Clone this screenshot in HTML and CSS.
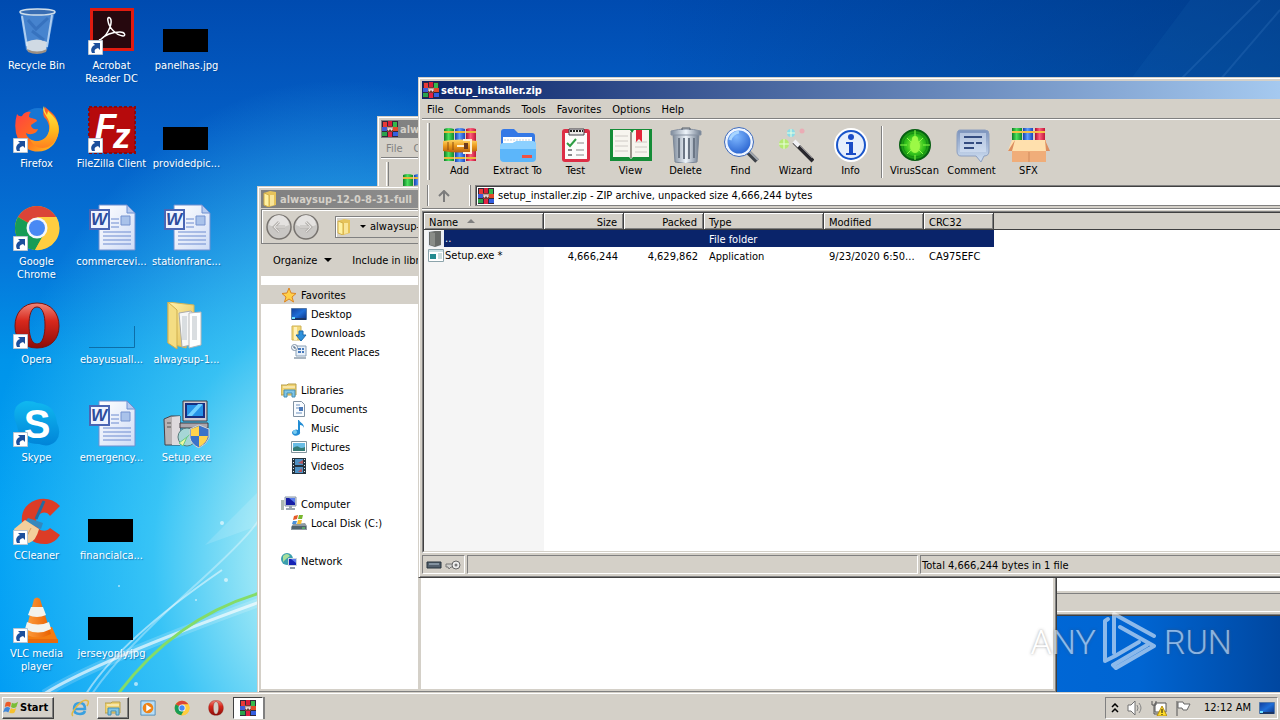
FILE: index.html
```html
<!DOCTYPE html>
<html lang="en">
<head>
<meta charset="utf-8">
<title>setup_installer.zip</title>
<link rel="stylesheet" href="styles.css">
</head>
<body>
<svg class="defs" aria-hidden="true">
  <defs>
    <linearGradient id="gBlue" x1="0" y1="0" x2="0" y2="1"><stop offset="0" stop-color="#2f6fe0"/><stop offset="1" stop-color="#5cc3ff"/></linearGradient>
    <linearGradient id="gRed" x1="0" y1="0" x2="0" y2="1"><stop offset="0" stop-color="#f0877a"/><stop offset=".4" stop-color="#d8281c"/><stop offset="1" stop-color="#8c0c08"/></linearGradient>
    <linearGradient id="gFox" x1="0" y1="0" x2="1" y2="1"><stop offset="0" stop-color="#ff3b4a"/><stop offset=".5" stop-color="#ff6a20"/><stop offset="1" stop-color="#ffcc1c"/></linearGradient>
    <linearGradient id="gFoxY" x1="0" y1="0" x2="0" y2="1"><stop offset="0" stop-color="#fff04a"/><stop offset=".6" stop-color="#ffb81c"/><stop offset="1" stop-color="#ff8020"/></linearGradient>
    <linearGradient id="gPage" x1="0" y1="0" x2="1" y2="1"><stop offset="0" stop-color="#fff"/><stop offset="1" stop-color="#cfdcf6"/></linearGradient>
    <linearGradient id="gFolder" x1="0" y1="0" x2="1" y2="1"><stop offset="0" stop-color="#fff3b0"/><stop offset="1" stop-color="#e3bc4a"/></linearGradient>
    <linearGradient id="gSteel" x1="0" y1="0" x2="1" y2="0"><stop offset="0" stop-color="#7e8b9c"/><stop offset=".5" stop-color="#eef4fa"/><stop offset="1" stop-color="#6f7c8e"/></linearGradient>
    <linearGradient id="gComment" x1="0" y1="0" x2="0" y2="1"><stop offset="0" stop-color="#7c93bc"/><stop offset="1" stop-color="#d3e2f4"/></linearGradient>
    <linearGradient id="gCone" x1="0" y1="0" x2="1" y2="0"><stop offset="0" stop-color="#ffa040"/><stop offset="1" stop-color="#e86000"/></linearGradient>
    <linearGradient id="gScreen" x1="0" y1="0" x2="1" y2="1"><stop offset="0" stop-color="#123f9c"/><stop offset=".5" stop-color="#1f6fd8"/><stop offset="1" stop-color="#0a2f80"/></linearGradient>
    <linearGradient id="gSkype" x1="0" y1="0" x2="0" y2="1"><stop offset="0" stop-color="#10b8f0"/><stop offset="1" stop-color="#0084d8"/></linearGradient>
    <linearGradient id="gBookG" x1="0" y1="0" x2="1" y2="0"><stop offset="0" stop-color="#0d7c26"/><stop offset=".45" stop-color="#4be05c"/><stop offset="1" stop-color="#128a2c"/></linearGradient>
    <linearGradient id="gBookB" x1="0" y1="0" x2="1" y2="0"><stop offset="0" stop-color="#1840a8"/><stop offset=".45" stop-color="#5a9cff"/><stop offset="1" stop-color="#1a48bc"/></linearGradient>
    <linearGradient id="gBookR" x1="0" y1="0" x2="1" y2="0"><stop offset="0" stop-color="#b01030"/><stop offset=".45" stop-color="#ff5c7c"/><stop offset="1" stop-color="#c01838"/></linearGradient>
    <linearGradient id="gBelt" x1="0" y1="0" x2="0" y2="1"><stop offset="0" stop-color="#ffd868"/><stop offset=".5" stop-color="#ec9a1c"/><stop offset="1" stop-color="#b8600c"/></linearGradient>
    <radialGradient id="gLens" cx=".4" cy=".3" r=".8"><stop offset="0" stop-color="#7fb8ff"/><stop offset="1" stop-color="#1c56c8"/></radialGradient>
    <radialGradient id="gGreen"><stop offset="0" stop-color="#b6ff50"/><stop offset=".6" stop-color="#34c41c"/><stop offset="1" stop-color="#118a10"/></radialGradient>
  </defs>

  <symbol id="shortcut" viewBox="0 0 15 15"><path d="M.5.5h14v14H.5z" fill="#fff" stroke="#b9c4d0"/><path d="M4 13C2 9 4 6 7 5L5 3h7v7l-2-2c-3 1-4 2-3 5z" fill="#1c4f9c"/></symbol>

  <symbol id="bin" viewBox="0 0 48 48"><path d="M7 3 13 42q11 6 21 0L42 3Q24-2 7 3z" fill="#8cb8e8" fill-opacity=".5"/><path d="M13 34q11-5 21 0l-1 8q-9 5-19 0z" fill="#dfe3e6" fill-opacity=".9"/><path d="m9 8 5 30M39 7l-5 32" stroke="#d9ecff" stroke-opacity=".7" stroke-width="2"/><path d="m15 12 8 9 12-11M19 23l12 9" stroke="#2762b0" stroke-opacity=".5" fill="none" stroke-width="3"/><ellipse cx="24.500" cy="4" rx="17.500" ry="3" fill="#396db2" stroke="#cfdeea" stroke-width="1.500"/><path d="M14 41q10 5 20 0l-1 3q-9 4-18 0z" fill="#9b8f84"/></symbol>
  <symbol id="acrobat" viewBox="0 0 48 48"><path d="M2 0h44v43H2z" fill="#e01b10"/><path d="M5 3h38v37H5z" fill="#26080e"/><path d="M11 32c8-3 13-15 12-20-1-4-4-3-3 1 1 7 8 14 15 15 3 0 2-4-3-4-7 0-15 3-20 8" fill="none" stroke="#fff" stroke-width="1.500"/></symbol>
  <symbol id="black" viewBox="0 0 48 48"><path d="M0 21h45v23H0z" fill="#000"/></symbol>
  <symbol id="thin" viewBox="0 0 48 48"><path d="M1 45.500h45.500V24" fill="none" stroke="#0d6ea8"/></symbol>
  <symbol id="firefox" viewBox="0 0 48 48"><circle cx="25" cy="19" r="17" fill="#1876d4"/><path d="M4 8q-4 14 1 25c6 13 24 17 34 7 9-9 9-26-1-34L32 1q-3 5-1 10c9 8 6 23-5 24-7 1-12-3-13-8 5 3 11 0 12-4-4 1-7-1-7-4l6-4c0-3-6-2-8-4 0-3 1-4 2-5Q12 5 9 10 6 11 4 8z" fill="url(#gFox)"/><path d="M31 0c-4 8 9 12 5 25-3 11-14 12-19 8 5 13 23 12 28-4 4-14-7-20-10-24l-1 4q-3-4-3-9z" fill="url(#gFoxY)"/></symbol>
  <symbol id="filezilla" viewBox="0 0 48 48"><path d="M1 1h46v46H1z" fill="#b60a0c" stroke="#8e0a0c" stroke-width="2" stroke-dasharray="3 2"/></symbol>
  <symbol id="chrome" viewBox="0 0 48 48"><circle cx="24" cy="24" r="22" fill="#fbc116"/><path d="M24 24 5 13a22 22 0 0 1 38 0z" fill="#db4437"/><path d="M24 24 5 13a22 22 0 0 0 17 33l9-16z" fill="#179c56"/><path d="M24 13h19.500a22 22 0 0 1-21.500 33l10-18z" fill="#ffcd40"/><circle cx="24" cy="24" r="10.500" fill="#f4f7fb"/><circle cx="24" cy="24" r="8" fill="#4889f4"/></symbol>
  <symbol id="word" viewBox="0 0 48 48"><path d="M11 1h28l8 8v37H11z" fill="url(#gPage)" stroke="#6f8fd0"/><path d="M39 1v8h8z" fill="#b6cbf0" stroke="#6f8fd0"/><path d="M23 15h8M23 19h8M23 23h8M15 28h28M15 32h28M15 36h28M15 40h28" stroke="#6c8bd0"/><path d="M33 12h9v9h-9z" fill="#a9c2ea" stroke="#7492cf"/><path d="M2 6h19v19H2z" fill="#eef3ff" stroke="#4a66b4" stroke-width="2"/></symbol>
  <symbol id="opera" viewBox="0 0 48 48"><path fill-rule="evenodd" d="M24 1C10 1 2 11 2 24s8 22 22 22 22-9 22-22S38 1 24 1zm0 4c6 0 8 9 8 18s-2 19-8 19-8-10-8-19 2-18 8-18z" fill="url(#gRed)" stroke="#7c1410"/></symbol>
  <symbol id="openfolder" viewBox="0 0 48 48"><path d="m5 0 26 3v9l-8 34L5 41z" fill="url(#gFolder)" stroke="#d3b556"/><path d="m16 11 12-2 4 5v28l-13 3z" fill="#f7f7f7" stroke="#aaa"/><path d="m26 11 12-1v33l-12 3z" fill="#fff" stroke="#b8b8b8"/><path d="M19 14h5v24h-5zM29 14h5v24h-5z" fill="#d9dde0"/><path d="m5 0 9 8v39l-9-6z" fill="#f4dd83" stroke="#cfae4c"/></symbol>
  <symbol id="skype" viewBox="0 0 48 48"><path d="M13 1q8 0 11 2 18 1 20 20 5 10-1 18-7 7-17 3Q7 44 4 26-1 15 3 7q4-5 10-6z" fill="url(#gSkype)"/></symbol>
  <symbol id="setup" viewBox="0 0 48 48"><path d="m1 19 7-3h9v29H2z" fill="#b7b2b3" stroke="#45424a"/><path d="m9 17 8-1v29H9z" fill="#dedadd"/><path d="M4 23h4M4 27h4" stroke="#555"/><path d="M20 1h24v20H20z" fill="#cfcbd4" stroke="#3c3940"/><path d="M23 4h18v13H23z" fill="#2593e8" stroke="#162f80" stroke-width="2"/><path d="m24 16 11-12h5L29 16z" fill="#71d1ff"/><path d="M17 23h28v5H17z" fill="#aaa6ad" stroke="#403c43"/><circle cx="24" cy="37" r="9" fill="#a6d6d6" stroke="#587b7b"/><path d="m24 37-8 6 4 3zM24 37l8-7" fill="#edf8a0" stroke="#67c987"/><path d="m36 25 10 4v9q-2 6-10 10-8-4-9-10v-9z" fill="#3b73c8" stroke="#d4d4d4"/><path d="M36 26v10h-8v-7zM36 36h9q-1 7-9 11z" fill="#ffd34d"/></symbol>
  <symbol id="ccleaner" viewBox="0 0 48 48"><path d="M47 8Q37-2 23 2 7 8 9 25q3 22 25 21 8-1 13-9l-10-7c-4 5-14 3-14-6s10-13 14-6z" fill="#dc3c26"/><path d="m31 3-8 18" stroke="#266b9e" stroke-width="3"/><path d="m15 20 15 5-2 6-16-7z" fill="#3588bd"/><path d="M12 22 1 31l3 10 12 4q7-2 10-14z" fill="#f3cf9c"/><path d="m10 34-4 8M18 30l-6 12" stroke="#d79d62"/></symbol>
  <symbol id="vlc" viewBox="0 0 48 48"><path d="m12 32-6 13h39l-6-14z" fill="#f47c10"/><path d="M21 3q3-3 6 0l11 35q-13 7-26 0z" fill="url(#gCone)"/><path d="m18 11 12 0 3 8q-9 4-18 0zM14 26q11 5 22 0l2 7q-13 7-26 0z" fill="#f3f3ed"/><path d="M6 43h39v4H6z" fill="#e86a0c"/></symbol>

  <symbol id="rar" viewBox="0 0 36 36"><path d="M2 2q4-2 10 0v32H2z" fill="url(#gBookG)"/><path d="M13 2q5-2 10 0v33H13z" fill="url(#gBookB)"/><path d="M24 2q5-2 10 0v32H24z" fill="url(#gBookR)"/><path d="M2 5h10M13 5h10M24 5h10M2 31h10M13 31h10M24 31h10" stroke="#e8b83c" stroke-width="2"/><path d="M1 14q17-3 34 0v10q-17 3-34 0z" fill="url(#gBelt)"/><path d="M21 13h8v13h-8M15 19h10" fill="none" stroke="#fff0d0" stroke-width="2"/><path d="M22 16h4v6h-4z" fill="#6c3a1c"/><path d="M6 15v8M11 15v8" stroke="#8c4c10"/></symbol>
  <symbol id="rarsmall" viewBox="0 0 16 16"><path d="M0 0h16v16H0z" fill="#342739"/><path d="M1 1h4v5H1z" fill="#e83a38"/><path d="M6 0h4v6H6z" fill="#d91e3a"/><path d="M11 1h4v5h-4z" fill="#35b94b"/><path d="M0 6h5v4H0z" fill="#3f5dd5"/><path d="M0 11h5v4H0z" fill="#2ca34d"/><path d="M6 11h4v5H6z" fill="#e32343"/><path d="M11 6h5v4h-5z" fill="#e34b28"/><path d="M11 11h5v4h-5z" fill="#345fe0"/><path d="M5 5h6v6H5z" fill="#7b3d32"/><path d="M6 6v3h1V7h2v2h1V6" stroke="#fff" fill="none"/></symbol>
  <symbol id="extract" viewBox="0 0 36 36"><path d="M1 5q0-3 3-3h10l4 4h14q3 0 3 3v22H1z" fill="#3478e6"/><path d="M3 10h29v12H3z" fill="#fff"/><path d="M4 13h27" stroke="#c3cfdf" stroke-dasharray="2 1"/><path d="M0 20q0-4 4-4h9l4-2h15q4 0 4 4v13q0 4-4 4H4q-4 0-4-4z" fill="#5cb6fa"/><path d="M0 20q0-4 4-4h9l4-2h15q4 0 4 4v4H0z" fill="#8cd0ff"/><path d="M22 28h10v3H22z" fill="#f05243"/></symbol>
  <symbol id="test" viewBox="0 0 36 36"><rect x="4" y="2" width="28" height="33" rx="3" fill="#dd2e45"/><path d="M7 6h22v26H7z" fill="#fcfcfa"/><path d="M11 2h15v6H11z" fill="#e9e7e5" stroke="#45404a"/><path d="M12 4h13" stroke="#222" stroke-width="2" stroke-dasharray="2 1"/><path d="m9 16 3 3 6-7" stroke="#2f9d43" fill="none" stroke-width="2"/><path d="M19 16h7M18 23h8M18 28h8" stroke="#888"/><path d="M10 23h4M10 28h4" stroke="#888" stroke-width="2"/></symbol>
  <symbol id="view" viewBox="0 0 44 36"><path d="M1 2h42v32H1z" fill="#148c37"/><path d="M4 3h17l2 3 2-3h15v27H24l-2 2-2-2H4z" fill="#f7f5ef"/><path d="M22 5v26" stroke="#9b948c" stroke-width="2"/><path d="M6 9h13M6 14h13M6 19h13M6 24h13M26 15h12M26 20h12M26 25h12" stroke="#cecac5"/><path d="M27 3h6v12l-3-3-3 3z" fill="#e32539"/></symbol>
  <symbol id="delete" viewBox="0 0 36 36"><path d="m5 7 2 28q10 3 22 0l2-28z" fill="url(#gSteel)" stroke="#7d8897"/><path d="M11 11v20M16 11v21M21 11v21M26 11v20" stroke="#6b7685" stroke-width="2"/><path d="M3 4q15-4 30 0v4H3z" fill="url(#gSteel)" stroke="#8792a2"/><path d="M14 3V1h8v2" fill="none" stroke="#56606c"/></symbol>
  <symbol id="find" viewBox="0 0 36 36"><path d="m24 24 10 10" stroke="#3d4147" stroke-width="5"/><path d="m25 23 10 10" stroke="#a2a8af" stroke-width="2"/><circle cx="16" cy="15" r="13" fill="url(#gLens)" stroke="#edf4ff" stroke-width="3"/><circle cx="16" cy="15" r="14.500" fill="none" stroke="#3c68ba"/><path d="M7 13q2-7 9-8" stroke="#a8d5ff" fill="none" stroke-width="3"/></symbol>
  <symbol id="wizard" viewBox="0 0 36 36"><path d="m16 15 19 19" stroke="#29282d" stroke-width="4"/><path d="m16 14 5 5" stroke="#f0f0f4" stroke-width="4"/><path d="m22 19 12 12" stroke="#85838b"/><circle cx="6" cy="17" r="5" fill="#aef05e" fill-opacity=".8"/><circle cx="13" cy="6" r="4" fill="#78dff0" fill-opacity=".8"/><circle cx="24" cy="4" r="2.500" fill="#f49cac" fill-opacity=".7"/><path d="M6 12v10M1 17h10M13 2v8M9 6h8" stroke="#eaffdf"/></symbol>
  <symbol id="info" viewBox="0 0 36 36"><circle cx="18" cy="18" r="16" fill="#e7effc" stroke="#fff" stroke-width="2"/><circle cx="18" cy="18" r="14" fill="none" stroke="#1a55ca" stroke-width="2"/><circle cx="18" cy="10" r="3" fill="#1b4cc6"/><path d="M13 15h7v11h3v2H13v-2h3v-9h-3z" fill="#1b4cc6"/></symbol>
  <symbol id="virus" viewBox="0 0 36 36"><circle cx="18" cy="18" r="15" fill="url(#gGreen)" stroke="#075f12" stroke-width="2"/><circle cx="18" cy="18" r="12" fill="none" stroke="#188f15"/><path d="M18 3v8M3 18h7M26 18h7M18 28v5M10 11l5 5M26 11l-5 5M10 27l5-5M26 27l-5-5" stroke="#8cfb4b"/><ellipse cx="18" cy="19" rx="5" ry="7" fill="#9cf946"/><circle cx="18" cy="12" r="3" fill="#9cf946"/></symbol>
  <symbol id="comment" viewBox="0 0 36 36"><path d="M6 3h25q4 0 4 4v17q0 5-5 5l-3 6-5-6H7q-4 0-4-5V8q0-5 3-5z" fill="url(#gComment)" stroke="#8c9fc0"/><path d="M6 6h26v19H6z" fill="#dce8f8" fill-opacity=".55"/><path d="M10 10h18M10 16h10M22 16h6M10 21h10" stroke="#344c80" stroke-width="2"/></symbol>
  <symbol id="sfx" viewBox="0 0 44 36"><path d="M5 1h10v14H5z" fill="url(#gBookG)"/><path d="M16 1h10v14H16z" fill="url(#gBookB)"/><path d="M28 1h10v14H28z" fill="url(#gBookR)"/><path d="M5 5h33" stroke="#f4c148" stroke-width="2"/><path d="M5 13h34v22H5z" fill="#f0ad79"/><path d="m5 13-4 11h40l-3-11z" fill="#ffe0ad"/><path d="M1 24h4l3-11zM38 13l5 11h-4z" fill="#dc8d5f"/><path d="M22 25v10" stroke="#d1895c"/></symbol>

  <symbol id="folder" viewBox="0 0 16 16"><path d="M2 2 8 0l6 1v13l-7 2-5-2z" fill="#e6c35a"/><path d="m2 2 5 2v12l-5-2z" fill="#fff1a0" stroke="#d3ae48"/><path d="M8 4h4v10l-4 1z" fill="#f9e599"/></symbol>
  <symbol id="darkfolder" viewBox="0 0 16 16"><path d="M0 0h16v16H0z" fill="#e9edf3"/><path d="m1 1 6-1h6v14l-6 2-6-2z" fill="#686b68"/><path d="m2 1 5 1v13l-5-1z" fill="#8a8d88"/></symbol>
  <symbol id="exe" viewBox="0 0 16 14"><path d="M.5.500h15v12H.5z" fill="#fff" stroke="#8ca4ab"/><path d="M1 1h14v2H1z" fill="#cfe1e5"/><path d="M2 5h6v5H2z" fill="#248b90"/><path d="M10 5h4M10 7h4M10 9h4" stroke="#9bb"/></symbol>
  <symbol id="star" viewBox="0 0 16 16"><path d="m8 1 2 5 5 .5-4 3.500 1.500 5L8 12l-4.500 3L5 10 1 6.500 6 6z" fill="#ffd04a" stroke="#dc8420"/></symbol>
  <symbol id="desktop" viewBox="0 0 16 16"><path d="M.5 2.500h15v11H.5z" fill="url(#gScreen)" stroke="#5579a8"/><path d="M1 12h14v2H1z" fill="#1a3564"/><path d="M1 12h3" stroke="#6ee0ff" stroke-width="2"/></symbol>
  <symbol id="downloads" viewBox="0 0 16 16"><path d="M1 1h9v14H1z" fill="#f4d979" stroke="#ceb257"/><path d="M3 2h3v13H3z" fill="#fff2ba"/><path d="M8 6h4v4h3l-5 6-5-6h3z" fill="#2e91dc" stroke="#1c6aab"/></symbol>
  <symbol id="recent" viewBox="0 0 16 16"><path d="M5 2h10v10H5z" fill="#e8f0f8" stroke="#8aa1b8"/><path d="M7 5h3M11 5h2M7 8h3M11 8h2" stroke="#4779bc" stroke-width="2"/><circle cx="3.500" cy="3.500" r="3" fill="#f4f8fb" stroke="#8294a8"/><path d="M3 2v2h2" stroke="#3c5876" fill="none"/><path d="M3 13h12v2H3z" fill="#a9b5c0"/></symbol>
  <symbol id="libraries" viewBox="0 0 16 16"><path d="M0 3h6l1-1h8v11H0z" fill="#f0d271" stroke="#b79f4d"/><path d="M2 5h12" stroke="#fffadf"/><path d="M3 15V8h11v7h-3v-4H6v4z" fill="#80c6e8" stroke="#448eb4"/></symbol>
  <symbol id="document" viewBox="0 0 16 16"><path d="M2.500.500h8l3 3v12h-11z" fill="#f9fcff" stroke="#8192a3"/><path d="M5 4h4M5 7h3M5 12h6" stroke="#6d91bd"/><path d="M8 6h4v4H8z" fill="#4a79b9"/></symbol>
  <symbol id="music" viewBox="0 0 16 16"><path d="M8 0c1 3 5 3 5 8q-1-3-4-3v7a4 3 0 1 1-2-2V0z" fill="#238dd4"/><circle cx="4" cy="12" r="2" fill="#78cbf0"/></symbol>
  <symbol id="pictures" viewBox="0 0 16 16"><path d="M.5 2.500h15v11H.5z" fill="#fff" stroke="#82949d"/><path d="M2 4h12v8H2z" fill="#69bde5"/><path d="M2 9q4-3 6-1t6 0v4H2z" fill="#357c77"/></symbol>
  <symbol id="videos" viewBox="0 0 16 16"><path d="M1 0h14v16H1z" fill="#25333e"/><path d="M4 1h8v6H4zM4 9h8v6H4z" fill="#4e91c4"/><path d="M2.500 1v14M13.500 1v14" stroke="#dde8ee" stroke-dasharray="1 2"/><path d="m7 5 5-3v4zM7 14l4-4v4z" fill="#b2575f"/></symbol>
  <symbol id="computer" viewBox="0 0 16 16"><path d="M0 4h3v10H0z" fill="#aebab2"/><path d="M4 1h11v9H4z" fill="#d4dce4" stroke="#8896a7"/><path d="M5 2h9v7H5z" fill="#171ea5"/><path d="m8 2 6 0v5z" fill="#577ceb"/><path d="M8 10h3v2h3v2H5v-2h3z" fill="#9aa6b1"/></symbol>
  <symbol id="disk" viewBox="0 0 16 16"><path d="m2 9 12-1 2 3v4H0v-3z" fill="#8e9aa2"/><path d="M1 11h14v3H1z" fill="#51636d"/><path d="M11 13h3" stroke="#68e66d"/><path d="m3 1 4-1-1 4-4 1z" fill="#e55a28"/><path d="M8 0h4l-1 4H7z" fill="#79b72e"/><path d="M2 6h4L5 9H1z" fill="#4b91da"/><path d="M7 5h4l-1 4H6z" fill="#f7bf35"/></symbol>
  <symbol id="network" viewBox="0 0 16 16"><circle cx="6" cy="6" r="6" fill="#3c9fae"/><path d="M2 3q4-4 7 0L5 6 2 9z" fill="#a6df9c"/><path d="M7 5h9v8H7z" fill="#cbd6dd"/><path d="M8 6h7v6H8z" fill="#1624b4"/><path d="m10 6 5 0v4z" fill="#5d79ee"/><path d="M9 14h5v2H9z" fill="#8e9aa6"/></symbol>
  <symbol id="winflag" viewBox="0 0 18 16"><path d="M3 2q3-2 6 0L8 7Q5 5 2 7z" fill="#ed5a27"/><path d="M10 2q3 2 7-1l-2 6q-3 2-6 0z" fill="#79bd36"/><path d="M2 8q3-2 6 0l-2 5q-3-2-6 0z" fill="#4087d8"/><path d="M9 8q3 2 6 0l-2 5q-3 2-6 0z" fill="#f6c12e"/></symbol>
  <symbol id="ie" viewBox="0 0 18 18"><path d="M4 10h10q0-6-5-6-6 0-6 6 0 5 6 5 4 0 5-3" fill="none" stroke="#3aa0e0" stroke-width="2.500"/><path d="M2 17Q-1 15 6 7t11-5q1 2-1 5" fill="none" stroke="#e2b841" stroke-width="1.500"/></symbol>
  <symbol id="wmp" viewBox="0 0 18 18"><path d="M1 1h16v16H1z" fill="#b8def7" stroke="#4c89b7"/><circle cx="9" cy="9" r="6" fill="#ef8316"/><path d="m7 5 6 4-6 4z" fill="#fff"/></symbol>
  <symbol id="chevrons" viewBox="0 0 8 10"><path d="m1 4 3-3 3 3M1 9l3-3 3 3" fill="none" stroke="#000" stroke-width="1.500"/></symbol>
  <symbol id="speaker" viewBox="0 0 16 16"><path d="M1 5h3l4-4v14l-4-4H1z" fill="#fff" stroke="#707070"/><path d="M10 5q2 3 0 6M12 3q4 5 0 10" stroke="#858585" fill="none"/></symbol>
  <symbol id="netwarn" viewBox="0 0 16 16"><path d="M4 3h11v9H4z" fill="#fff" stroke="#555"/><path d="M1 1v4h4V1M3 5v9h4" fill="none" stroke="#555"/><path d="m11 6 5 10H6z" fill="#ffdc29" stroke="#b48d10"/><path d="M11 9v4M11 14v1" stroke="#111"/></symbol>
  <symbol id="flag" viewBox="0 0 16 16"><path d="M2 1v15" stroke="#555"/><path d="M3 2h5l1 2h6l-3 6H8L7 8H3z" fill="#fff" stroke="#666"/></symbol>
  <symbol id="sort" viewBox="0 0 8 4"><path d="m0 4 4-4 4 4z" fill="#808080"/></symbol>
  <symbol id="caret" viewBox="0 0 8 4"><path d="m0 0 4 4 4-4z" fill="#000"/></symbol>
  <symbol id="up" viewBox="0 0 12 12"><path d="M6 12V2M1 6l5-5 5 5" fill="none" stroke="#7c7c7c" stroke-width="2"/></symbol>
  <symbol id="back" viewBox="0 0 26 26"><circle cx="13" cy="13" r="12" fill="#c9c7c4" stroke="#77736f" stroke-width="1.500"/><path d="M3 11a10 10 0 0 1 20 0q-10 5-20 0z" fill="#e4e2e0"/><path d="m13 8-5 5 5 5M8 13h11" fill="none" stroke="#b8b5b1" stroke-width="3"/><path d="m13 8-5 5 5 5M8 13h11" fill="none" stroke="#e6e4e2"/></symbol>
  <symbol id="chip" viewBox="0 0 16 12"><path d="M1 3h14v6H1z" fill="#53606d" stroke="#26323c"/><path d="M3 5h10" stroke="#b3c4d3"/></symbol>
  <symbol id="key" viewBox="0 0 16 12"><path d="M1 5h8v3H6l-2 2-1-2H1z" fill="#d2d2cf" stroke="#777"/><circle cx="11" cy="6" r="4" fill="#eee" stroke="#666"/><circle cx="11" cy="6" r="1.500" fill="#777"/></symbol>
</svg>

<div class="screen">
  <main class="desktop">
    <svg class="swirls" viewBox="0 0 260 692" aria-hidden="true">
      <g fill="none" stroke="#fff">
        <path d="M44 694Q95 662 260 602" stroke-opacity=".18" stroke-width="9"/>
        <path d="M44 694Q95 662 260 602" stroke-opacity=".65" stroke-width="3"/>
        <path d="M86 694Q120 640 222 570" stroke-opacity=".5" stroke-width="2"/>
        <path d="M92 694Q118 655 190 590T260 515" stroke-opacity=".35" stroke-width="2"/>
        <path d="M205 545 260 490V525z" fill="#fff" fill-opacity=".14" stroke="none"/>
      </g>
      <path d="M118 694Q175 618 260 593" fill="none" stroke="#84dc68" stroke-width="3"/>
      <g fill="#fff" fill-opacity=".6"><circle cx="222" cy="523" r="2"/><circle cx="136" cy="684" r="2"/><circle cx="119" cy="586" r="1"/><circle cx="226" cy="580" r="2"/><circle cx="196" cy="600" r="1"/></g>
    </svg>
    <svg class="rays" viewBox="0 0 240 80" aria-hidden="true"><path d="M140 80 220 0M180 80 240 10" stroke="#8fc8ff" stroke-opacity=".12" stroke-width="2"/><path d="M90 80 150 0h90v80z" fill="#2b82c8" fill-opacity=".1"/></svg>

    <div class="icons">
      <button class="shortcut"><span class="pic"><svg><use href="#bin"/></svg></span>Recycle Bin</button>
      <button class="shortcut"><span class="pic"><svg><use href="#firefox"/></svg><svg class="arrow"><use href="#shortcut"/></svg></span>Firefox</button>
      <button class="shortcut"><span class="pic"><svg><use href="#chrome"/></svg><svg class="arrow"><use href="#shortcut"/></svg></span>Google Chrome</button>
      <button class="shortcut"><span class="pic"><svg><use href="#opera"/></svg><svg class="arrow"><use href="#shortcut"/></svg></span>Opera</button>
      <button class="shortcut"><span class="pic"><svg viewBox="0 0 48 48"><use href="#skype"/><text x="24" y="38" text-anchor="middle" class="sk">S</text></svg><svg class="arrow"><use href="#shortcut"/></svg></span>Skype</button>
      <button class="shortcut"><span class="pic"><svg><use href="#ccleaner"/></svg><svg class="arrow"><use href="#shortcut"/></svg></span>CCleaner</button>
      <button class="shortcut"><span class="pic"><svg><use href="#vlc"/></svg><svg class="arrow"><use href="#shortcut"/></svg></span>VLC media player</button>
      <button class="shortcut"><span class="pic"><svg><use href="#acrobat"/></svg><svg class="arrow"><use href="#shortcut"/></svg></span>Acrobat Reader DC</button>
      <button class="shortcut"><span class="pic"><svg viewBox="0 0 48 48"><use href="#filezilla"/><text class="fz"><tspan x="7" y="32">F</tspan><tspan x="25" y="42">z</tspan></text></svg><svg class="arrow"><use href="#shortcut"/></svg></span>FileZilla Client</button>
      <button class="shortcut"><span class="pic"><svg viewBox="0 0 48 48"><use href="#word"/><text x="3" y="21" class="wd">W</text></svg></span>commercevi...</button>
      <button class="shortcut"><span class="pic"><svg><use href="#thin"/></svg></span>ebayusuall...</button>
      <button class="shortcut"><span class="pic"><svg viewBox="0 0 48 48"><use href="#word"/><text x="3" y="21" class="wd">W</text></svg></span>emergency...</button>
      <button class="shortcut"><span class="pic"><svg><use href="#black"/></svg></span>financialca...</button>
      <button class="shortcut"><span class="pic"><svg><use href="#black"/></svg></span>jerseyonly.jpg</button>
      <button class="shortcut"><span class="pic"><svg><use href="#black"/></svg></span>panelhas.jpg</button>
      <button class="shortcut"><span class="pic"><svg><use href="#black"/></svg></span>providedpic...</button>
      <button class="shortcut"><span class="pic"><svg viewBox="0 0 48 48"><use href="#word"/><text x="3" y="21" class="wd">W</text></svg></span>stationfranc...</button>
      <button class="shortcut"><span class="pic"><svg><use href="#openfolder"/></svg></span>alwaysup-1...</button>
      <button class="shortcut"><span class="pic"><svg><use href="#setup"/></svg></span>Setup.exe</button>
    </div>

    <section class="window rear">
      <header class="title inactive"><svg class="i16"><use href="#rarsmall"/></svg>alwaysup</header>
      <nav class="menu dim"><button>File</button><button>Commands</button></nav>
      <div class="toolbar"><button class="tool"><svg class="i36"><use href="#rar"/></svg></button></div>
      <div class="list"></div>
      <footer class="status"><span class="panel grow"></span></footer>
    </section>

    <section class="window explorer">
      <header class="title inactive"><svg class="i16"><use href="#folder"/></svg>alwaysup-12-0-8-31-full</header>
      <div class="navbar">
        <button aria-label="Back"><svg class="i26"><use href="#back"/></svg></button><button aria-label="Forward"><svg class="i26 flip"><use href="#back"/></svg></button>
        <button class="crumb"><svg class="i16"><use href="#folder"/></svg><svg class="caret small"><use href="#caret"/></svg>alwaysup-12-0-8-31-full</button>
      </div>
      <div class="commandbar"><button>Organize <svg class="caret"><use href="#caret"/></svg></button><button>Include in library</button></div>
      <div class="panes">
        <nav class="tree">
          <a class="root selected" href="#"><svg class="i16"><use href="#star"/></svg>Favorites</a>
          <a href="#"><svg class="i16"><use href="#desktop"/></svg>Desktop</a>
          <a href="#"><svg class="i16"><use href="#downloads"/></svg>Downloads</a>
          <a href="#"><svg class="i16"><use href="#recent"/></svg>Recent Places</a>
          <a class="root" href="#"><svg class="i16"><use href="#libraries"/></svg>Libraries</a>
          <a href="#"><svg class="i16"><use href="#document"/></svg>Documents</a>
          <a href="#"><svg class="i16"><use href="#music"/></svg>Music</a>
          <a href="#"><svg class="i16"><use href="#pictures"/></svg>Pictures</a>
          <a href="#"><svg class="i16"><use href="#videos"/></svg>Videos</a>
          <a class="root" href="#"><svg class="i16"><use href="#computer"/></svg>Computer</a>
          <a href="#"><svg class="i16"><use href="#disk"/></svg>Local Disk (C:)</a>
          <a class="root" href="#"><svg class="i16"><use href="#network"/></svg>Network</a>
        </nav>
        <div class="content"></div>
      </div>
    </section>

    <section class="window main">
      <header class="title"><svg class="i16"><use href="#rarsmall"/></svg>setup_installer.zip</header>
      <nav class="menu"><button>File</button><button>Commands</button><button>Tools</button><button>Favorites</button><button>Options</button><button>Help</button></nav>
      <div class="toolbar">
        <button class="tool"><svg class="i36"><use href="#rar"/></svg>Add</button>
        <button class="tool wide"><svg class="i36"><use href="#extract"/></svg>Extract To</button>
        <button class="tool"><svg class="i36"><use href="#test"/></svg>Test</button>
        <button class="tool"><svg class="i44"><use href="#view"/></svg>View</button>
        <button class="tool"><svg class="i36"><use href="#delete"/></svg>Delete</button>
        <button class="tool"><svg class="i36"><use href="#find"/></svg>Find</button>
        <button class="tool"><svg class="i36"><use href="#wizard"/></svg>Wizard</button>
        <button class="tool"><svg class="i36"><use href="#info"/></svg>Info</button>
        <span class="divider"></span>
        <button class="tool medium"><svg class="i36"><use href="#virus"/></svg>VirusScan</button>
        <button class="tool medium"><svg class="i36"><use href="#comment"/></svg>Comment</button>
        <button class="tool medium"><svg class="i44"><use href="#sfx"/></svg>SFX</button>
      </div>
      <div class="address">
        <button class="upbtn" aria-label="Up"><svg class="i12"><use href="#up"/></svg></button>
        <label class="path"><svg class="i16"><use href="#rarsmall"/></svg><input type="text" aria-label="Archive path" value="setup_installer.zip - ZIP archive, unpacked size 4,666,244 bytes"></label>
      </div>
      <div class="list">
        <div class="listing">
        <table>
          <thead><tr><th class="name">Name <svg class="caret sort"><use href="#sort"/></svg></th><th class="num">Size</th><th class="num">Packed</th><th class="type">Type</th><th class="date">Modified</th><th class="crc">CRC32</th></tr></thead>
          <tbody>
            <tr class="selected"><td class="file"><svg class="i16"><use href="#darkfolder"/></svg>..</td><td></td><td></td><td>File folder</td><td></td><td></td></tr>
            <tr><td class="file"><svg class="i16"><use href="#exe"/></svg>Setup.exe *</td><td class="num">4,666,244</td><td class="num">4,629,862</td><td>Application</td><td>9/23/2020 6:50...</td><td>CA975EFC</td></tr>
          </tbody>
        </table>
        </div>
      </div>
      <footer class="status"><span class="panel badges"><svg class="i16"><use href="#chip"/></svg><svg class="i16"><use href="#key"/></svg></span><span class="panel grow"></span><span class="panel total">Total 4,666,244 bytes in 1 file</span></footer>
    </section>

    <div class="watermark">ANY<svg viewBox="0 0 56 62" aria-hidden="true"><g fill="none" stroke="#fff" stroke-width="4" stroke-linejoin="round" stroke-linecap="round"><path d="M6 8 3 10v40l10-5 24-14"/><path d="M12 42V3l40 22M18 16l34 19-38 22-3-3 34-20"/></g></svg>RUN</div>
  </main>

  <footer class="taskbar">
    <button class="start"><svg class="i16"><use href="#winflag"/></svg>Start</button>
    <button class="task" aria-label="Internet Explorer"><svg class="i18"><use href="#ie"/></svg></button>
    <button class="task raised" aria-label="Explorer"><svg class="i16"><use href="#libraries"/></svg></button>
    <button class="task" aria-label="Media Player"><svg class="i16"><use href="#wmp"/></svg></button>
    <button class="task" aria-label="Chrome"><svg class="i16"><use href="#chrome"/></svg></button>
    <button class="task" aria-label="Opera"><svg class="i16"><use href="#opera"/></svg></button>
    <button class="task pressed" aria-label="WinRAR"><svg class="i16"><use href="#rarsmall"/></svg></button>
    <div class="tray"><svg class="chev"><use href="#chevrons"/></svg><svg class="i16"><use href="#speaker"/></svg><svg class="i16"><use href="#netwarn"/></svg><svg class="i16"><use href="#flag"/></svg><time>12:12 AM</time><svg class="i16"><use href="#desktop"/></svg></div>
  </footer>
</div>
</body>
</html>
```

FILE: styles.css
```css
* { box-sizing: border-box; }
body { margin: 0; font: 11px/13px Tahoma, "DejaVu Sans Condensed", "Noto Sans", sans-serif; color: #000; }
.defs { position: absolute; width: 0; height: 0; }
svg { display: block; flex: none; }
button { font: inherit; color: inherit; background: none; border: 0; padding: 0; margin: 0; white-space: nowrap; }
a { color: inherit; text-decoration: none; }
.screen { display: flex; flex-direction: column; height: 100vh; overflow: hidden; }

.desktop {
  position: relative; flex: 1; min-height: 0; overflow: hidden;
  background:
    radial-gradient(ellipse 360px 480px at 340px 560px, #c8f5f6 0%, #a5ecf6e6 25%, #50d4f7b0 52%, #10a8f000 100%),
    linear-gradient(90deg, #00308000 50%, #00306a80 100%),
    linear-gradient(180deg, #004bb0 0%, #0460c8 20%, #0578da 38%, #0094ea 52%, #00a0f4 75%, #009cf4 100%);
}
.desktop::after { content: ""; position: absolute; z-index: 0; left: 1000px; right: 0; top: 600px; bottom: 0; background: linear-gradient(90deg, #0068d8, #0065d2 50%, #0047a0); }
.swirls { position: absolute; left: 0; bottom: 0; width: 260px; height: 692px; }
.rays { position: absolute; right: 0; top: 0; width: 240px; height: 80px; }

.icons { position: relative; display: grid; grid-auto-flow: column; grid-template-rows: repeat(7, 98px); grid-auto-columns: 75px; width: max-content; padding-top: 8px; margin-left: -1px; }
.shortcut { display: flex; flex-direction: column; align-items: center; justify-content: flex-start; gap: 3px; color: #fff; white-space: normal; text-shadow: 1px 1px 1px #00408080; }
.pic { position: relative; width: 48px; height: 48px; flex: none; }
.pic svg { width: 48px; height: 48px; }
.pic .arrow { position: absolute; left: 0; bottom: 1px; width: 15px; height: 15px; }
.pic text { text-shadow: none; }
.fz { font: italic bold 35px "Liberation Sans", sans-serif; fill: #fff; }
.wd { font: italic bold 17px "Liberation Sans", sans-serif; fill: #2c4c9c; }
.sk { font: bold 40px "Liberation Sans", sans-serif; fill: #fff; }

.i12 { width: 12px; height: 12px; }
.i16 { width: 16px; height: 16px; }
.i18 { width: 18px; height: 18px; }
.i26 { width: 26px; height: 26px; }
.i36 { width: 36px; height: 36px; }
.i44 { width: 44px; height: 36px; }
.caret { width: 8px; height: 4px; }
.caret.small { width: 6px; height: 3px; }
.flip { transform: scaleX(-1); }

.window { position: absolute; z-index: 1; display: flex; flex-direction: column; background: #d4d0c8; border: 1px solid #d4d0c8; border-right-color: #404040; border-bottom-color: #404040; box-shadow: inset 1px 1px #fff, inset -1px -1px #808080; padding: 3px; overflow: hidden; }
.rear { left: 377px; top: 116px; right: -8px; bottom: 76px; }
.explorer { left: 257px; top: 186px; right: 223px; bottom: -1px; }
.main { left: 418px; top: 77px; right: -8px; bottom: 114px; }

.title { display: flex; align-items: center; gap: 2px; flex: none; height: 18px; padding-left: 1px; background: linear-gradient(90deg, #0a246a, #a6caf0); color: #fff; font-weight: bold; }
.title.inactive { background: linear-gradient(90deg, #808080, #c0c0c0); color: #d4d0c8; }
.menu { display: flex; flex: none; gap: 11px; height: 19px; padding: 1px 0 0 5px; }
.dim { color: #808080; }
.toolbar { display: flex; align-items: center; flex: none; height: 66px; padding-left: 10px; border-top: 1px solid #808080; box-shadow: inset 0 1px #fff; background: linear-gradient(#fff, #fff) 5px 4px / 1px 57px no-repeat, linear-gradient(#808080, #808080) 7px 4px / 1px 57px no-repeat; }
.tool { display: flex; flex-direction: column; align-items: center; gap: 1px; flex: none; width: 55px; }
.tool.wide { width: 61px; }
.tool.medium { width: 57px; }
.divider { width: 2px; height: 52px; margin: 0 3px; border-left: 1px solid #808080; border-right: 1px solid #fff; }
.address { display: flex; flex: none; height: 25px; padding: 1px 0 2px 5px; border-bottom: 1px solid #808080; box-shadow: 0 1px #fff; }
.upbtn { display: flex; align-items: center; justify-content: center; width: 44px; padding-right: 10px; border-left: 1px solid #808080; border-right: 1px solid #808080; box-shadow: inset 1px 0 #fff, inset -1px 0 #fff; }
.path { flex: 1; display: flex; align-items: center; gap: 4px; margin-left: 4px; padding-left: 2px; background: #fff; border: 1px solid #808080; box-shadow: inset 1px 1px #404040; }
.path input { flex: 1; font: inherit; border: 0; background: none; padding: 0; outline: 0; }

.list { flex: 1; min-height: 0; margin-top: 2px; border: 1px solid #808080; border-bottom-color: #fff; background: #fff; display: flex; }
.listing { flex: 1; border: 1px solid #404040; border-bottom-color: #d4d0c8; background: linear-gradient(#404040, #404040) 0 16px / 100% 1px no-repeat, linear-gradient(#d4d0c8, #d4d0c8) 0 0 / 100% 16px no-repeat, linear-gradient(#f5f5f5, #f5f5f5) 0 0 / 120px 100% no-repeat, #fff; }
table { border-collapse: separate; border-spacing: 0; table-layout: fixed; width: 570px; }
th { height: 17px; padding: 2px 5px 0; font-weight: normal; text-align: left; background: #d4d0c8; border-right: 1px solid #404040; border-bottom: 1px solid #404040; box-shadow: inset 1px 1px #fff, inset -1px -1px #808080; line-height: 13px; }
th svg { display: inline-block; vertical-align: 3px; margin-left: 6px; }
td { height: 17px; padding: 2px 0 0 5px; line-height: 13px; white-space: nowrap; }
.name, .type { width: 120px; }
.num { width: 80px; text-align: right; padding-right: 6px; }
.date { width: 100px; }
.crc { width: 70px; }
.file { padding: 0 0 0 4px; }
.file svg { display: inline-block; vertical-align: middle; margin-right: 1px; }
tr.selected { background: #0a246a; color: #fff; }
tr.selected .file { background: linear-gradient(#f5f5f5, #f5f5f5) 0 0 / 20px 100% no-repeat; }

.status { display: flex; flex: none; gap: 2px; height: 21px; padding-top: 2px; }
.panel { display: flex; align-items: center; border: 1px solid #808080; border-right-color: #fff; border-bottom-color: #fff; padding: 1px 0 0 1px; }
.badges { width: 43px; gap: 3px; padding-left: 3px; }
.grow { flex: 1; }
.total { width: 364px; }

.navbar { display: flex; align-items: center; flex: none; gap: 1px; height: 35px; margin-top: 1px; padding-left: 4px; border: 1px solid #808080; box-shadow: inset 1px 1px #fff; }
.crumb { flex: 1; display: flex; align-items: center; gap: 4px; height: 22px; margin-left: 15px; border: 1px solid #808080; box-shadow: inset 1px 1px #fff; }
.crumb .small { margin-left: 4px; }
.commandbar { display: flex; flex: none; align-items: center; gap: 20px; height: 32px; padding-left: 12px; }
.commandbar button { display: flex; align-items: center; gap: 7px; }
.panes { flex: 1; min-height: 0; display: flex; background: #fff; }
.tree { width: 160px; padding-top: 9px; display: flex; flex-direction: column; flex: none; border-right: 3px solid #d4d0c8; }
.tree a { display: flex; align-items: center; gap: 4px; height: 19px; flex: none; padding: 1px 0 0 30px; white-space: nowrap; }
.tree .root { padding-left: 20px; margin-top: 19px; }
.tree .selected { background: #d4d0c8; margin-top: 0; }

.watermark { position: absolute; z-index: 2; right: 48px; bottom: 19px; display: flex; align-items: center; gap: 6px; font: 300 34px/62px "Liberation Sans Narrow", "Roboto", sans-serif; color: #fff; opacity: .55; text-shadow: 0 0 3px #555; }
.watermark svg { width: 56px; height: 62px; }

.taskbar { display: flex; align-items: center; flex: none; height: 28px; padding: 2px 2px 0; background: #d4d0c8; border-top: 1px solid #d4d0c8; box-shadow: inset 0 1px #fff; }
.start { display: flex; align-items: center; gap: 1px; width: 52px; height: 22px; font-weight: bold; border: 1px solid #fff; border-right-color: #404040; border-bottom-color: #404040; box-shadow: inset -1px -1px #808080; margin-right: 9px; }
.task { display: flex; align-items: center; justify-content: center; width: 34px; height: 22px; }
.task.raised { width: 32px; margin-right: 2px; border: 1px solid #fff; border-right-color: #404040; border-bottom-color: #404040; box-shadow: inset -1px -1px #808080; }
.task.pressed { width: 30px; background: #fff; border: 1px solid #404040; border-right-color: #fff; border-bottom-color: #fff; box-shadow: 2px 0 #808080; }
.tray { display: flex; align-items: center; gap: 8px; height: 22px; margin-left: auto; padding: 0 2px 0 5px; border: 1px solid #808080; border-right-color: #fff; border-bottom-color: #fff; }
.tray time { margin-left: 5px; }
.chev { width: 8px; height: 10px; }
```
